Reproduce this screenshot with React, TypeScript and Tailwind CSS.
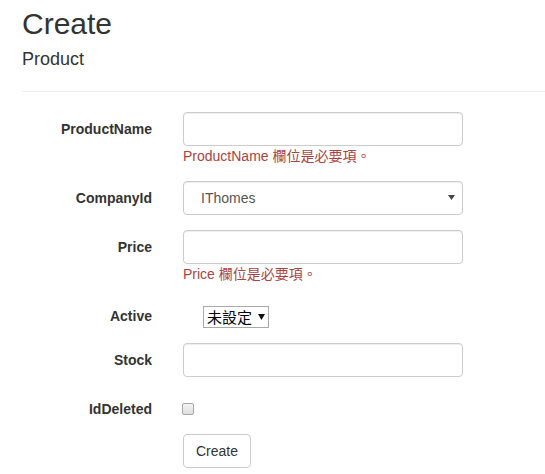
import React from "react";

const Label = ({ children }: { children: React.ReactNode }) => (
  <div className="w-[130px] shrink-0 pt-[7px] text-right font-bold leading-[20px]">{children}</div>
);

const TextInput = () => (
  <input
    type="text"
    className="block h-[34px] w-[280px] rounded-[4px] border border-[#ccc] bg-white px-[12px] text-[14px] text-[#555] shadow-[inset_0_1px_1px_rgba(0,0,0,0.075)] outline-none"
  />
);

const Err = ({ children }: { children: React.ReactNode }) => (
  <div className="leading-[20px] text-[#a94442]">{children}</div>
);

export default function App() {
  return (
    <div className="min-h-screen overflow-hidden bg-white pl-[22px] pt-[7px] font-['Liberation_Sans','Noto_Sans_CJK_TC',sans-serif] text-[14px] leading-[20px] text-[#333]">
      <h2 className="text-[30px] font-normal leading-[33px]">Create</h2>
      <h4 className="mt-[10px] text-[18px] font-normal leading-[19.8px]">Product</h4>
      <hr className="mt-[21px] mb-[20px] border-t border-[#eee]" />

      <div className="flex flex-col gap-[15px]">
        <div className="flex">
          <Label>ProductName</Label>
          <div className="ml-[31px]">
            <TextInput />
            <Err>ProductName 欄位是必要項。</Err>
          </div>
        </div>

        <div className="flex">
          <Label>CompanyId</Label>
          <div className="ml-[31px]">
            <div className="relative flex h-[34px] w-[280px] items-center rounded-[4px] border border-[#ccc] bg-white pl-[17px] text-[#555] shadow-[inset_0_1px_1px_rgba(0,0,0,0.075)]">
              <span>IThomes</span>
              <svg className="absolute right-[7px] top-[13px]" width="7" height="5" viewBox="0 0 7 5">
                <path d="M0 0 L7 0 L3.5 5 Z" fill="#444" />
              </svg>
            </div>
          </div>
        </div>

        <div className="flex">
          <Label>Price</Label>
          <div className="ml-[31px]">
            <TextInput />
            <Err>Price 欄位是必要項。</Err>
          </div>
        </div>

        <div className="flex h-[29px]">
          <Label>Active</Label>
          <div className="ml-[31px] pl-[20px] pt-[7px]">
            <div className="flex h-[22px] w-[66px] items-center gap-[6px] border border-[#a9a9a9] bg-white pl-[3px] text-[15px] text-black">
              <span className="font-['Noto_Sans_CJK_TC',sans-serif] leading-[20px]">未設定</span>
              <svg width="7" height="6" viewBox="0 0 7 6">
                <path d="M0 0 L7 0 L3.5 6 Z" fill="#111" />
              </svg>
            </div>
          </div>
        </div>

        <div className="flex">
          <Label>Stock</Label>
          <div className="ml-[31px]">
            <TextInput />
          </div>
        </div>

        <div className="flex h-[27px]">
          <Label>IdDeleted</Label>
          <div className="ml-[30px] pt-[11px]">
            <div className="h-[12px] w-[12px] rounded-[2px] border border-[#a6a6a6] bg-gradient-to-b from-[#f4f4f4] to-[#dedede]" />
          </div>
        </div>

        <div className="flex">
          <div className="w-[130px] shrink-0" />
          <div className="ml-[31px]">
            <button className="h-[34px] rounded-[4px] border border-[#ccc] bg-white px-[12px] text-[14px] leading-[20px] text-[#333]">
              Create
            </button>
          </div>
        </div>
      </div>
    </div>
  );
}
